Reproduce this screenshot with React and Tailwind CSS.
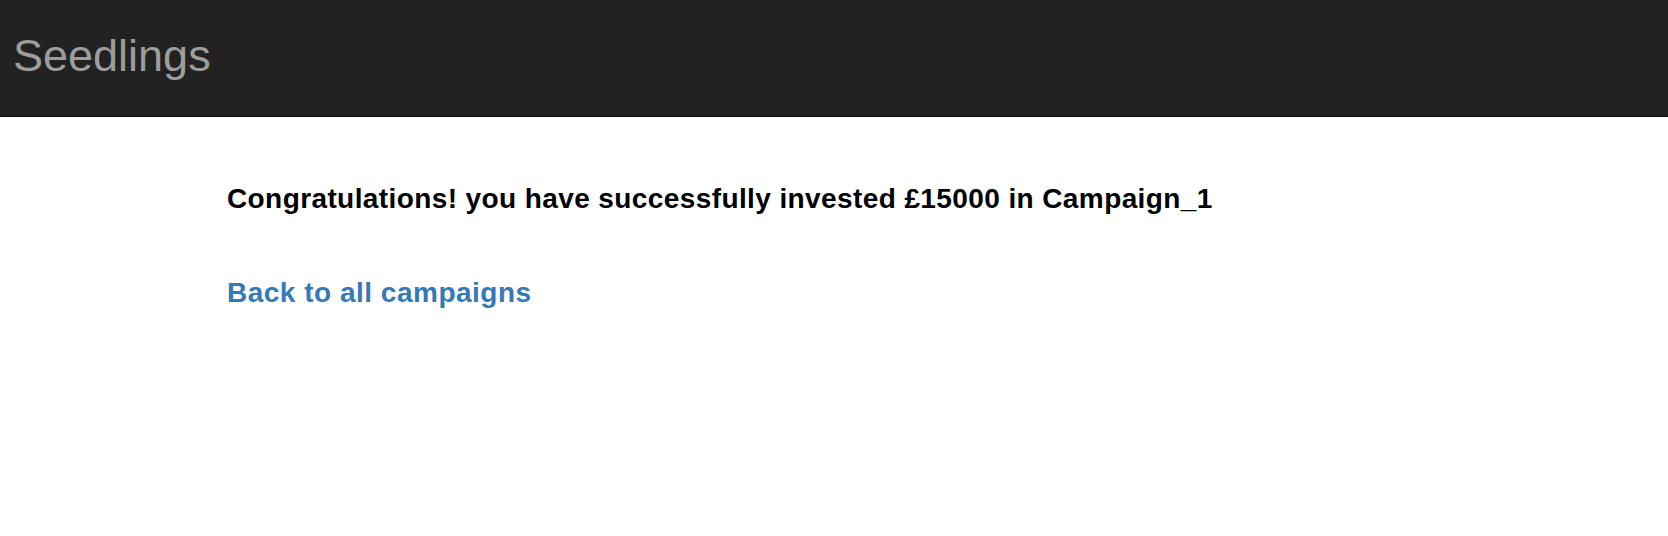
import React from "react";

const App = () => {
  return (
    <div className="min-h-[536px] bg-white font-['Liberation_Sans',Arial,sans-serif]">
      {/* navbar */}
      <div className="h-[117px] bg-[#222222] border-b border-[#080808] flex items-center px-[13px]">
        <span className="text-[45px] text-[#9d9d9d] leading-none -mt-[5px]">Seedlings</span>
      </div>

      {/* content */}
      <div className="w-[1214px] mx-auto pt-[67px]">
        <h4 className="text-[28px] font-bold text-black leading-[1.1] tracking-[0.4px]">
          Congratulations! you have successfully invested £15000 in Campaign_1
        </h4>
        <a href="#" className="block mt-[63px] text-[28px] font-bold text-[#337ab7] leading-[1.1] tracking-[0.5px]">
          Back to all campaigns
        </a>
      </div>
    </div>
  );
};

export default App;
